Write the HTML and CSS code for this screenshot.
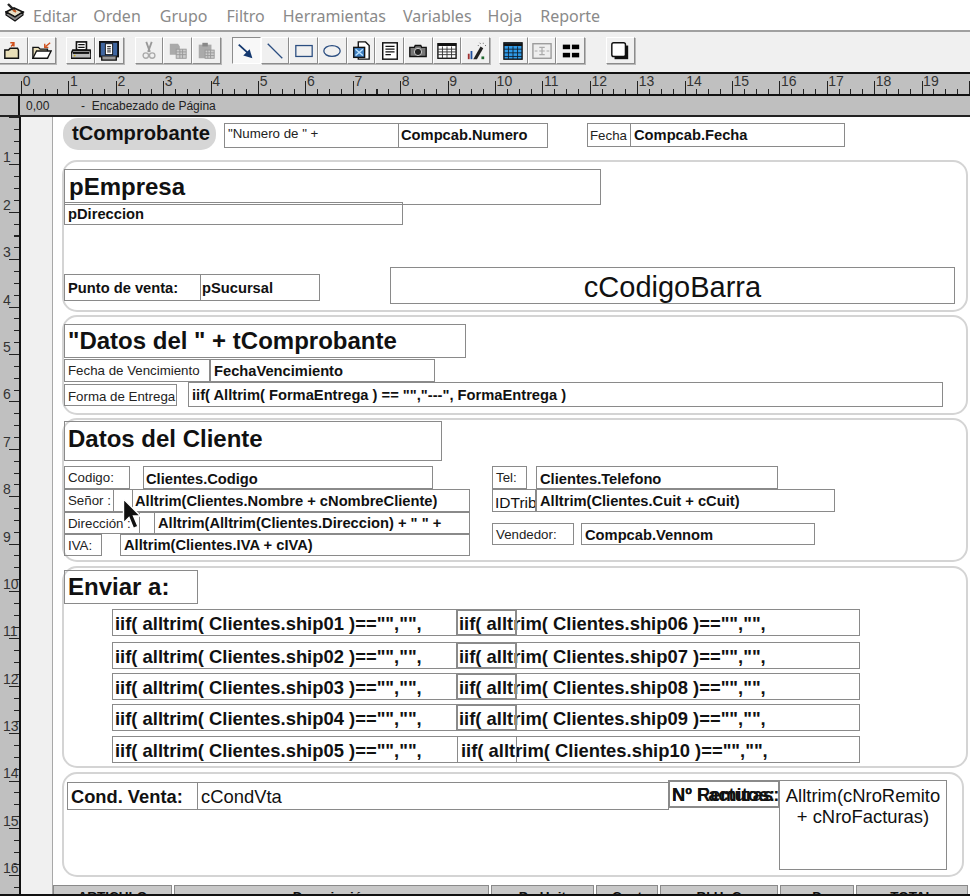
FILE: index.html
```html
<!DOCTYPE html>
<html lang="es">
<head>
<meta charset="utf-8">
<title>Reporte</title>
<link rel="stylesheet" href="styles.css">
</head>
<body>
<nav class="menubar">
  <svg class="app-icon" viewBox="0 0 20 20"><path d="M1 9l8-4 9 4-8 5z" fill="#e8e0c8" stroke="#111" stroke-width="1.6"/><path d="M1 9v3l9 6 8-6V9l-8 5z" fill="#8a8a8a" stroke="#111" stroke-width="1.2"/><path d="M3 1l7 7" stroke="#222" stroke-width="2.4"/><path d="M8 7l3 2" stroke="#c85a20" stroke-width="2"/></svg>
  <span class="menu-item m-editar">Editar</span>
  <span class="menu-item m-orden">Orden</span>
  <span class="menu-item m-grupo">Grupo</span>
  <span class="menu-item m-filtro">Filtro</span>
  <span class="menu-item m-herr">Herramientas</span>
  <span class="menu-item m-vars">Variables</span>
  <span class="menu-item m-hoja">Hoja</span>
  <span class="menu-item m-rep">Reporte</span>
</nav>

<div class="toolbar">
  <div class="tool-group g1">
    <button class="tool"><svg viewBox="0 0 22 22"><path d="M2 10h4l2-2h8l1 2v9H2z" fill="#e9dfb8" stroke="#111" stroke-width="1.6"/><path d="M12 2l-3 4M8 2h4v4" fill="none" stroke="#d0501c" stroke-width="1.6"/></svg></button>
    <button class="tool"><svg viewBox="0 0 22 22"><path d="M1 7h6l2 2h8v10H1z" fill="#e9dfb8" stroke="#111" stroke-width="1.5"/><path d="M1 19l4-8h16l-4 8z" fill="#fff" stroke="#111" stroke-width="1.5"/><path d="M20 2l-5 4M14 3v4h4" fill="none" stroke="#d0501c" stroke-width="1.5"/></svg></button>
  </div>
  <div class="tool-group g2">
    <button class="tool"><svg viewBox="0 0 22 22"><rect x="6" y="1" width="11" height="9" fill="#fff" stroke="#111" stroke-width="1.8"/><path d="M8 4h7M8 7h7" stroke="#111" stroke-width="1.2"/><path d="M2 10h19l1 4v5H0v-5z" fill="#bbb" stroke="#111" stroke-width="1.8"/><path d="M2 13h18" stroke="#111" stroke-width="2.4"/><circle cx="4" cy="16" r="1" fill="#c8b020"/></svg></button>
    <button class="tool"><svg viewBox="0 0 22 22"><rect x="1" y="1" width="20" height="16" fill="#3f66a0" stroke="#111" stroke-width="2"/><rect x="7" y="3" width="8" height="12" fill="#fff" stroke="#111"/><path d="M9 6h4M9 8h4M9 10h4M9 12h4" stroke="#111"/><path d="M3 17v4h16v-4" fill="#999" stroke="#111" stroke-width="1.5"/></svg></button>
  </div>
  <div class="tool-group g3">
    <button class="tool"><svg viewBox="0 0 22 22"><path d="M8 1l4 11M14 1l-4 11" stroke="#999" stroke-width="2"/><circle cx="7.500" cy="16" r="3" fill="none" stroke="#aaa" stroke-width="1.500"/><circle cx="14.500" cy="16" r="3" fill="none" stroke="#aaa" stroke-width="1.500"/></svg></button>
    <button class="tool"><svg viewBox="0 0 22 22"><path d="M2 3h9l2 3v9H2z" fill="#aaa"/><rect x="9" y="9" width="11" height="10" fill="#ccc" stroke="#999"/><path d="M9 12h11M9 15h11M13 9v10M16 9v10" stroke="#999"/></svg></button>
    <button class="tool"><svg viewBox="0 0 22 22"><rect x="3" y="4" width="14" height="15" fill="#aaa"/><rect x="7" y="2" width="6" height="4" fill="#888"/><rect x="10" y="10" width="10" height="9" fill="#ccc" stroke="#999"/><path d="M10 13h10M10 16h10M13 10v9M16 10v9" stroke="#999"/></svg></button>
  </div>
  <div class="tool-group g4">
    <button class="tool pressed"><svg viewBox="0 0 22 22"><path d="M3 4l10 9" stroke="#14386f" stroke-width="2"/><path d="M8 16l10 3-3-10z" fill="#14386f"/></svg></button>
    <button class="tool"><svg viewBox="0 0 22 22"><path d="M3 3l16 16" stroke="#2a4d80" stroke-width="1.400"/></svg></button>
    <button class="tool"><svg viewBox="0 0 22 22"><rect x="2" y="5" width="18" height="12" fill="none" stroke="#2a4d80" stroke-width="1.400"/></svg></button>
    <button class="tool"><svg viewBox="0 0 22 22"><ellipse cx="11" cy="11" rx="9" ry="6" fill="none" stroke="#2a4d80" stroke-width="1.400"/></svg></button>
    <button class="tool"><svg viewBox="0 0 22 22"><path d="M8 1h8l4 4v15H8z" fill="#fff" stroke="#111" stroke-width="1.500"/><rect x="3" y="7" width="12" height="11" fill="#3f7fc0" stroke="#111" stroke-width="1.500"/><path d="M5 9l8 7M13 9l-8 7" stroke="#bfe4ff" stroke-width="1.500"/></svg></button>
    <button class="tool"><svg viewBox="0 0 22 22"><rect x="3" y="2" width="16" height="18" fill="#fff" stroke="#111" stroke-width="1.600"/><path d="M6 6h10M6 9h10M6 12h10M6 15h6" stroke="#111" stroke-width="1.400"/></svg></button>
    <button class="tool"><svg viewBox="0 0 22 22"><path d="M2 7h5l1-2h6l1 2h5v10H2z" fill="#777" stroke="#111" stroke-width="1.500"/><circle cx="11" cy="12" r="4" fill="#222" stroke="#ddd"/></svg></button>
    <button class="tool"><svg viewBox="0 0 22 22"><rect x="1" y="3" width="20" height="16" fill="#fff" stroke="#111" stroke-width="1.500"/><path d="M1 4h20" stroke="#111" stroke-width="3"/><path d="M1 9h20M1 12h20M1 15h20M6 6v13M11 6v13M16 6v13" stroke="#333"/></svg></button>
    <button class="tool"><svg viewBox="0 0 22 22"><path d="M8 20l8-14 3 2-7 12z" fill="#222"/><rect x="2" y="14" width="2" height="6" fill="#a03030"/><rect x="5" y="11" width="2" height="9" fill="#2050a0"/><rect x="17" y="17" width="3" height="3" fill="#206a30"/><path d="M15 2l1 1M19 2v1M21 5h1M13 5h1" stroke="#555"/></svg></button>
  </div>
  <div class="tool-group g5">
    <button class="tool"><svg viewBox="0 0 22 22"><rect x="1" y="2" width="20" height="18" fill="#2f9be8" stroke="#111" stroke-width="1.500"/><path d="M1 4h20" stroke="#111" stroke-width="3"/><path d="M1 9h20M1 13h20M1 17h20M6 6v14M11 6v14M16 6v14" stroke="#123"/></svg></button>
    <button class="tool"><svg viewBox="0 0 22 22"><rect x="1" y="3" width="20" height="16" fill="#eee" stroke="#999" stroke-width="1.500"/><path d="M8 7h6M8 11h6M8 15h6M11 7v8M3 11h3M16 11h3" stroke="#aaa" stroke-width="1.300"/></svg></button>
    <button class="tool"><svg viewBox="0 0 22 22"><rect x="2" y="4" width="8" height="5"/><rect x="12" y="4" width="8" height="5"/><rect x="2" y="13" width="8" height="5"/><rect x="12" y="13" width="8" height="5"/></svg></button>
  </div>
  <div class="tool-group g6">
    <button class="tool"><svg viewBox="0 0 22 22"><rect x="5" y="5" width="15" height="15" fill="#111"/><rect x="2" y="2" width="15" height="15" rx="2" fill="#fff" stroke="#111" stroke-width="1.600"/></svg></button>
  </div>
</div>

<div class="h-ruler">
  <span>0</span><span>1</span><span>2</span><span>3</span><span>4</span><span>5</span><span>6</span><span>7</span><span>8</span><span>9</span><span>10</span><span>11</span><span>12</span><span>13</span><span>14</span><span>15</span><span>16</span><span>17</span><span>18</span><span>19</span>
</div>

<div class="band-head">
  <div class="band-corner"></div>
  <span class="band-pos">0,00</span>
  <span class="band-name">-&nbsp; Encabezado de Página</span>
</div>

<div class="workspace">
  <div class="v-ruler">
    <span>1</span><span>2</span><span>3</span><span>4</span><span>5</span><span>6</span><span>7</span><span>8</span><span>9</span><span>10</span><span>11</span><span>12</span><span>13</span><span>14</span><span>15</span><span>16</span>
  </div>
  <div class="gutter"></div>
  <main class="canvas">
    <div class="frame b1"></div>
    <div class="frame b2"></div>
    <div class="frame b3"></div>
    <div class="frame b4"></div>
    <div class="frame b5"></div>

    <div class="pill">tComprobante</div>
    <div class="obj small top o-numde">"Numero de " +</div>
    <div class="obj bold o-num">Compcab.Numero</div>
    <div class="obj small o-fecl">Fecha</div>
    <div class="obj bold o-fec">Compcab.Fecha</div>

    <div class="obj big o-emp">pEmpresa</div>
    <div class="obj bold o-dir">pDireccion</div>
    <div class="obj bold o-pto">Punto de venta:</div>
    <div class="obj bold o-suc">pSucursal</div>
    <div class="obj barcode o-bar">cCodigoBarra</div>

    <div class="obj big o-dat">"Datos del " + tComprobante</div>
    <div class="obj small o-fvl">Fecha de Vencimiento</div>
    <div class="obj bold o-fv">FechaVencimiento</div>
    <div class="obj small o-fel">Forma de Entrega</div>
    <div class="obj bold o-fe">iif( Alltrim( FormaEntrega ) == "","---", FormaEntrega )</div>

    <div class="obj big o-cli">Datos del Cliente</div>
    <div class="obj small o-codl">Codigo:</div>
    <div class="obj bold o-cod">Clientes.Codigo</div>
    <div class="obj small o-senl">Señor :</div>
    <div class="obj o-senb"></div>
    <div class="obj bold o-sen">Alltrim(Clientes.Nombre + cNombreCliente)</div>
    <div class="obj small o-dirl">Dirección :</div>
    <div class="obj o-dirb"></div>
    <div class="obj bold o-dire">Alltrim(Alltrim(Clientes.Direccion) + " " +</div>
    <div class="obj small o-ival">IVA:</div>
    <div class="obj bold o-iva">Alltrim(Clientes.IVA + cIVA)</div>
    <div class="obj small o-tell">Tel:</div>
    <div class="obj bold o-tel">Clientes.Telefono</div>
    <div class="obj plain o-idl">IDTrib</div>
    <div class="obj bold o-id">Alltrim(Clientes.Cuit + cCuit)</div>
    <div class="obj small o-venl">Vendedor:</div>
    <div class="obj bold o-ven">Compcab.Vennom</div>

    <div class="obj big o-env">Enviar a:</div>

    <div class="ship-row r1"><div class="obj-f ship-l">iif( alltrim( Clientes.ship01 )=="","",</div><div class="obj-f ship-r">iif( alltrim( Clientes.ship06 )=="","",</div><div class="ship-mid"></div></div>
    <div class="ship-row r2"><div class="obj-f ship-l">iif( alltrim( Clientes.ship02 )=="","",</div><div class="obj-f ship-r">iif( alltrim( Clientes.ship07 )=="","",</div><div class="ship-mid"></div></div>
    <div class="ship-row r3"><div class="obj-f ship-l">iif( alltrim( Clientes.ship03 )=="","",</div><div class="obj-f ship-r">iif( alltrim( Clientes.ship08 )=="","",</div><div class="ship-mid"></div></div>
    <div class="ship-row r4"><div class="obj-f ship-l">iif( alltrim( Clientes.ship04 )=="","",</div><div class="obj-f ship-r">iif( alltrim( Clientes.ship09 )=="","",</div><div class="ship-mid"></div></div>
    <div class="ship-row r5"><div class="obj-f ship-l wide">iif( alltrim( Clientes.ship05 )=="","",</div><div class="obj-f ship-r narrow">iif( alltrim( Clientes.ship10 )=="","",</div><div class="ship-mid thin"></div></div>

    <div class="obj mid-bold o-condl">Cond. Venta:</div>
    <div class="obj mid o-cond">cCondVta</div>
    <div class="obj mid-bold o-nf"><span>Nº Remitos:</span><span>Nº Facturas:</span></div>
    <div class="obj mid o-nro">Alltrim(cNroRemito + cNroFacturas)</div>

    <div class="col-heads">
      <div class="col c1">ARTICULO</div>
      <div class="col c2">Descripción</div>
      <div class="col c3">Pr. Unit</div>
      <div class="col c4">Cant</div>
      <div class="col c5">Bl.Hr.C</div>
      <div class="col c6">D</div>
      <div class="col c7">TOTAL</div>
    </div>

    <svg class="cursor" viewBox="0 0 18 32"><path d="M1.500 1v24l5.500-5.500 4.500 11 4.500-2-4.500-10.500h7z" fill="#111" stroke="#fff" stroke-width="1.400"/></svg>
  </main>
</div>
</body>
</html>
```

FILE: styles.css
```css
* { box-sizing: border-box; }
html, body { margin: 0; padding: 0; }
body {
  width: 970px; height: 896px; overflow: hidden;
  background: #fff; color: #111;
  font-family: "Liberation Sans", Arial, sans-serif;
  display: flex; flex-direction: column;
}

/* menu */
.menubar {
  height: 30px; display: flex; align-items: center; flex: none;
  font-family: "Noto Sans", sans-serif; font-size: 16px; color: #8a8a8a;
  padding-left: 5px;
}
.app-icon { width: 20px; height: 20px; flex: none; margin-top: -4px; }
.menu-item { margin-top: 2px; flex: none; }
.m-editar { margin-left: 8px; }
.m-orden { margin-left: 16px; }
.m-grupo { margin-left: 19px; }
.m-filtro { margin-left: 19px; }
.m-herr { margin-left: 18px; }
.m-vars { margin-left: 17px; }
.m-hoja { margin-left: 16px; }
.m-rep { margin-left: 18px; }

/* toolbar */
.toolbar {
  height: 42px; flex: none; display: flex; align-items: flex-start;
  background: #f0f0f0; border-top: 2px solid #a0a0a0;
  padding-top: 5px;
}
.tool-group { display: flex; flex: none; }
.g1 { margin-left: -1px; }
.g2 { margin-left: 10px; }
.g3 { margin-left: 11px; }
.g4 { margin-left: 11px; }
.g5 { margin-left: 9px; }
.g6 { margin-left: 21px; }
.tool {
  width: 28.700px; height: 27px; padding: 0; flex: none;
  display: flex; align-items: center; justify-content: center;
  background: #f0f0f0;
  border: 1px solid; border-color: #fff #8c8c8c #8c8c8c #fff;
  box-shadow: 1px 1px 0 #b8b8b8;
}
.tool svg { width: 20px; height: 20px; }
.tool.pressed { border-color: #8c8c8c #fff #fff #8c8c8c; box-shadow: none; background: #f8f8f8; }

/* rulers */
.h-ruler {
  height: 24px; flex: none; display: flex; padding-left: 20.700px;
  border-top: 2px solid #111; border-bottom: 2px solid #111;
  background-color: #c0c0c0;
  background-image:
    repeating-linear-gradient(90deg, #222 0 1px, transparent 1px 47.400px),
    repeating-linear-gradient(90deg, #222 0 1px, transparent 1px 11.850px);
  background-size: 100% 13px, 100% 5px;
  background-position: 20.700px bottom, 20.700px bottom;
  background-repeat: no-repeat;
  font-size: 14px; line-height: 14px; color: #333;
}
.h-ruler span { width: 47.400px; flex: none; padding-left: 2px; }

.band-head {
  height: 21px; flex: none; display: flex; align-items: center;
  background: #bfbfbf; border-bottom: 2px solid #222;
  font-size: 12px; color: #222;
}
.band-corner { width: 20px; height: 100%; border-right: 2px solid #111; flex: none; }
.band-pos { margin-left: 6px; width: 55px; flex: none; }

.workspace { flex: 1; min-height: 0; display: flex; border-bottom: 2px solid #111; }
.v-ruler {
  width: 21px; flex: none; display: flex; flex-direction: column;
  border-right: 2px solid #111;
  background-color: #c0c0c0;
  background-image:
    repeating-linear-gradient(180deg, #222 0 1px, transparent 1px 47.400px),
    repeating-linear-gradient(180deg, #222 0 1px, transparent 1px 11.850px);
  background-size: 10px 100%, 5px 100%;
  background-position: right top, right top;
  background-repeat: no-repeat;
  font-size: 14px; line-height: 14px; color: #333;
}
.v-ruler span { height: 47.400px; flex: none; display: flex; align-items: flex-end; padding-left: 3px; }
.gutter { width: 32px; flex: none; background: #f0f0f0; border-right: 1px solid #a8a8a8; }

/* canvas */
.canvas { position: relative; flex: 1; min-width: 0; overflow: hidden; background: #fff; }
.frame { position: absolute; border: 2px solid #d4d4d4; border-radius: 15px; }
.b1 { left: 9px; top: 43px; width: 906px; height: 152px; }
.b2 { left: 9px; top: 198px; width: 906px; height: 100px; }
.b3 { left: 9px; top: 301px; width: 906px; height: 144px; }
.b4 { left: 9px; top: 449px; width: 906px; height: 202px; }
.b5 { left: 9px; top: 655px; width: 902px; height: 105px; }

.pill {
  position: absolute; left: 10px; top: 1px; width: 153px; height: 32px;
  background: #d6d6d6; border-radius: 15px;
  font-weight: bold; font-size: 20.200px; line-height: 30px; padding-left: 9px; white-space: nowrap;
}
.obj {
  position: absolute; border: 1px solid #8a8a8a; overflow: hidden; white-space: nowrap;
  padding-left: 3px; display: flex; align-items: center;
}
.small { font-size: 13.300px; color: #222; }
.top { align-items: flex-start; padding-top: 2px; }
.bold { font-size: 14.700px; font-weight: bold; }
.big { font-size: 24px; font-weight: bold; }
.plain { font-size: 15.500px; padding-left: 2px; }
.barcode { font-size: 29px; justify-content: center; padding: 3px 0 0; }
.mid { font-size: 18.400px; padding-top: 2px; }
.mid-bold { font-size: 18.300px; font-weight: bold; padding-top: 2px; }

.o-numde { left: 171px; top: 6px; width: 175px; height: 25px; }
.o-num { left: 345px; top: 6px; width: 150px; height: 25px; padding-left: 2px; padding-bottom: 1px; }
.o-fecl { left: 534px; top: 6px; width: 44px; height: 24px; padding-left: 2px; }
.o-fec { left: 577px; top: 6px; width: 215px; height: 24px; }
.o-emp { left: 11px; top: 52px; width: 537px; height: 36px; padding-left: 4px; }
.o-dir { left: 11px; top: 85px; width: 339px; height: 23px; }
.o-pto { left: 11px; top: 157px; width: 137px; height: 27px; }
.o-suc { left: 147px; top: 157px; width: 120px; height: 27px; padding-left: 1px; }
.o-bar { left: 337px; top: 150px; width: 565px; height: 37px; }
.o-dat { left: 11px; top: 207px; width: 402px; height: 34px; }
.o-fvl { left: 11px; top: 242px; width: 146px; height: 23px; }
.o-fv { left: 157px; top: 242px; width: 225px; height: 23px; }
.o-fel { left: 11px; top: 267px; width: 113px; height: 22px; padding-top: 2px; }
.o-fe { left: 135px; top: 265px; width: 755px; height: 25px; }
.o-cli { left: 11px; top: 304px; width: 378px; height: 40px; padding-bottom: 4px; }
.o-codl { left: 11px; top: 349px; width: 66px; height: 23px; }
.o-cod { left: 90px; top: 349px; width: 290px; height: 23px; padding-left: 2px; padding-top: 3px; }
.o-senl { left: 11px; top: 372px; width: 50px; height: 23px; }
.o-senb { left: 60px; top: 372px; width: 20px; height: 23px; }
.o-sen { left: 79px; top: 372px; width: 338px; height: 23px; padding-left: 2px; }
.o-dirl { left: 11px; top: 395px; width: 76px; height: 22px; }
.o-dirb { left: 86px; top: 395px; width: 16px; height: 22px; }
.o-dire { left: 101px; top: 395px; width: 316px; height: 22px; }
.o-ival { left: 11px; top: 417px; width: 38px; height: 22px; }
.o-iva { left: 67px; top: 417px; width: 350px; height: 22px; }
.o-tell { left: 439px; top: 349px; width: 35px; height: 23px; }
.o-tel { left: 483px; top: 349px; width: 242px; height: 23px; padding-top: 3px; }
.o-idl { left: 439px; top: 372px; width: 44px; height: 23px; padding-top: 4px; }
.o-id { left: 483px; top: 372px; width: 299px; height: 23px; }
.o-venl { left: 439px; top: 406px; width: 82px; height: 22px; }
.o-ven { left: 528px; top: 406px; width: 234px; height: 22px; padding-top: 2px; }
.o-env { left: 11px; top: 453px; width: 134px; height: 34px; }

.ship-row { position: absolute; left: 59px; width: 749px; height: 27px; display: flex; }
.r1 { top: 492px; }
.r2 { top: 525px; }
.r3 { top: 556px; }
.r4 { top: 587px; }
.r5 { top: 619px; }
.obj-f {
  border: 1px solid #8a8a8a; font-size: 18.400px; font-weight: bold; line-height: 27px;
  padding-left: 2px; white-space: nowrap; overflow: hidden; flex: none;
}
.ship-l { width: 345px; }
.ship-r { width: 404px; margin-left: -1px; }
.ship-l.wide { width: 346px; }
.ship-r.narrow { width: 403px; padding-left: 3px; }
.ship-mid {
  position: absolute; left: 344px; top: 0; width: 61px; height: 27px;
  border: 2px solid #8a8a8a;
}
.ship-mid.thin { left: 345px; width: 60px; border-width: 1px; }

.o-condl { left: 14px; top: 665px; width: 131px; height: 28px; }
.o-cond { left: 144px; top: 665px; width: 472px; height: 28px; }
.o-nf { left: 615px; top: 663px; width: 112px; height: 28px; border-width: 2px; padding-left: 2px; z-index: 1; background: #fff; }
.o-nf span { position: absolute; left: 2px; }
.o-nro {
  left: 726px; top: 663px; width: 168px; height: 90px; padding: 4px 0 0;
  display: block; white-space: normal; text-align: center; line-height: 21px;
}
.col-heads { position: absolute; left: 0; top: 768px; width: 917px; height: 10px; display: flex; gap: 2px; }
.col {
  background: #c8c8c8; border: 1px solid #8a8a8a; border-bottom: 0;
  font-size: 13.500px; font-weight: bold; text-align: center; padding-top: 3px; flex: none;
  overflow: hidden; white-space: nowrap;
}
.c1 { width: 119px; }
.c2 { width: 315px; }
.c3 { width: 103px; }
.c4 { width: 62px; }
.c5 { width: 118px; }
.c6 { width: 74px; }
.c7 { width: 112px; }
.cursor { position: absolute; left: 69px; top: 381px; width: 18px; height: 32px; z-index: 5; }
```
